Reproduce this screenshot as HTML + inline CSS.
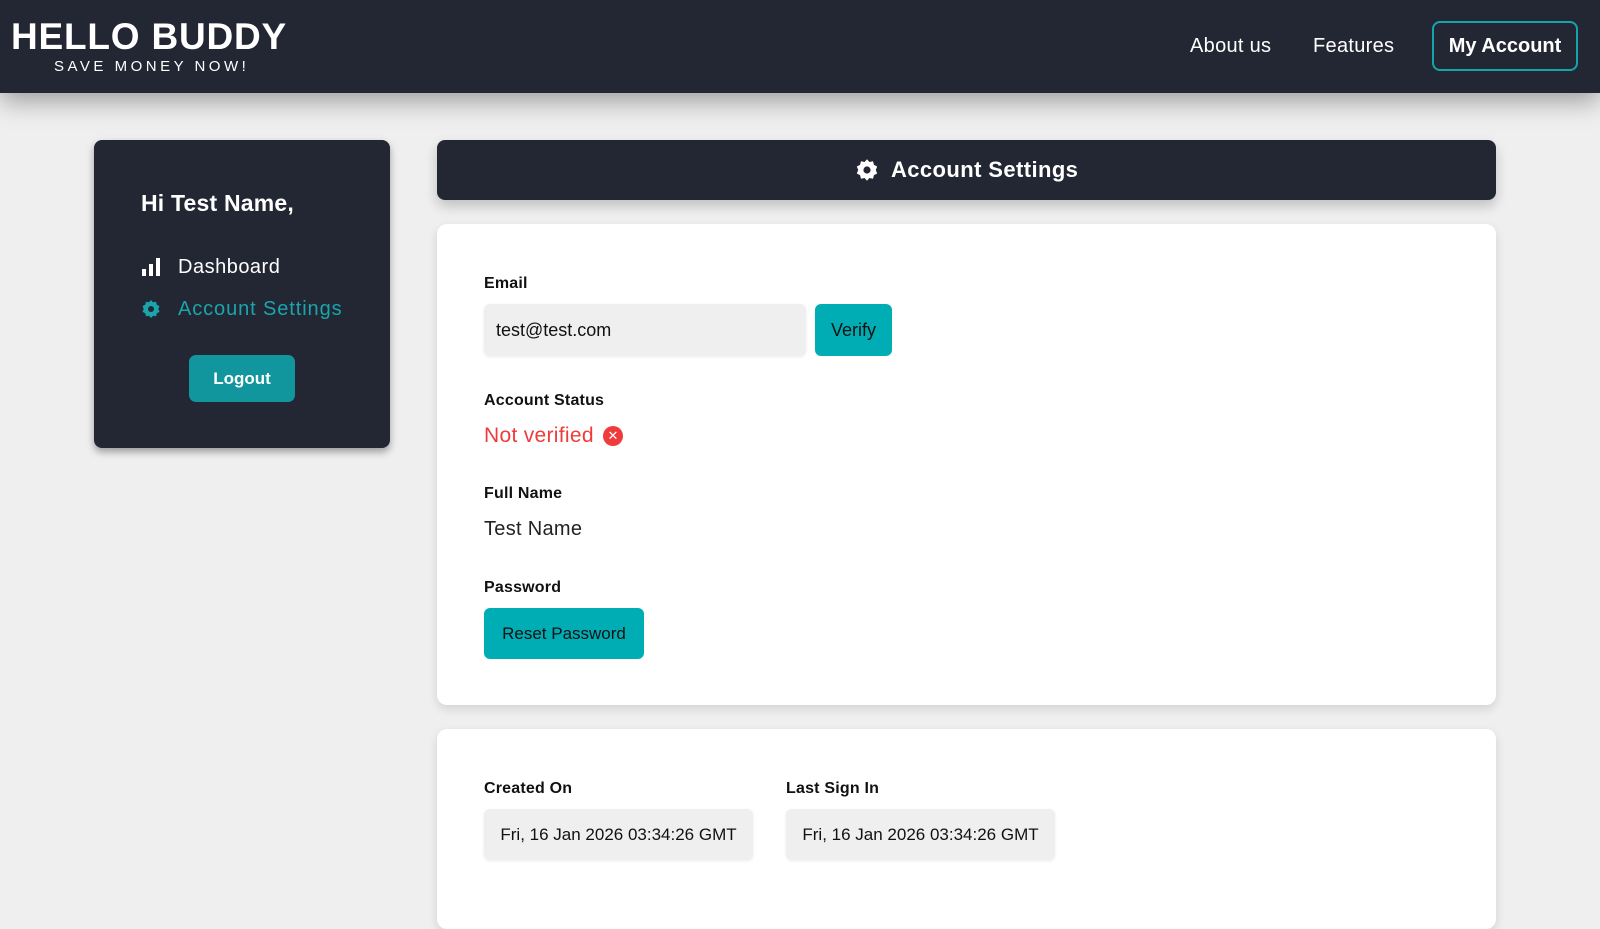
<!DOCTYPE html>
<html><head><meta charset="utf-8"><style>
*{box-sizing:border-box;margin:0;padding:0}
body{width:1600px;height:899px;overflow:hidden;background:#efefef;font-family:"Liberation Sans",sans-serif;color:#111;position:relative}
.hdr{position:absolute;left:0;top:0;width:1600px;height:93px;background:#232733;box-shadow:0 8px 24px rgba(0,0,0,.35);z-index:2}
.logo{position:absolute;left:11px;top:16px;color:#fff;font-weight:bold;font-size:37px;letter-spacing:0.8px;line-height:42px}
.tag{position:absolute;left:54px;top:58px;color:#fff;font-size:15px;letter-spacing:3.5px}
.nav{position:absolute;top:35px;color:#fff;font-size:20px;letter-spacing:0.3px}
.acct{position:absolute;left:1432px;top:21px;width:146px;height:50px;border:2px solid #14a5ab;border-radius:8px;color:#fff;font-weight:bold;font-size:20px;text-align:center;line-height:46px}
.side{position:absolute;left:94px;top:140px;width:296px;height:308px;background:#232733;border-radius:8px;box-shadow:0 4px 8px rgba(0,0,0,.35)}
.abs{position:absolute}
.tbar{position:absolute;left:437px;top:140px;width:1059px;height:60px;background:#232733;border-radius:8px;box-shadow:0 6px 12px rgba(0,0,0,.2);color:#fff;font-weight:bold;font-size:22px;letter-spacing:0.4px}
.card{position:absolute;left:437px;width:1059px;background:#fff;border-radius:10px;box-shadow:0 4px 10px rgba(0,0,0,.12)}
.lbl{position:absolute;font-weight:bold;font-size:16px;letter-spacing:0.2px}
.box{position:absolute;background:#efefef;border-radius:6px;font-size:18px;box-shadow:0 1px 3px rgba(0,0,0,.08)}
.btn{position:absolute;background:#00adb5;border-radius:6px;font-size:18px;color:#111;text-align:center}
</style></head><body>
<div class="hdr">
<div class="logo">HELLO BUDDY</div>
<div class="tag">SAVE MONEY NOW!</div>
<div class="nav" style="left:1190px">About us</div>
<div class="nav" style="left:1313px">Features</div>
<div class="acct">My Account</div>
</div>
<div class="side">
<div class="abs" style="left:47px;top:50px;color:#fff;font-weight:bold;font-size:23px;letter-spacing:0.2px">Hi Test Name,</div>
<svg class="abs" style="left:47px;top:117px" width="20" height="20" viewBox="0 0 20 20"><rect x="1" y="12" width="4" height="7" fill="#fff"/><rect x="8" y="7" width="4" height="12" fill="#fff"/><rect x="15" y="1" width="4" height="18" fill="#fff"/></svg>
<div class="abs" style="left:84px;top:116px;color:#fff;font-size:20px;letter-spacing:0.5px">Dashboard</div>
<svg class="abs" style="left:47px;top:159px" width="20" height="20" viewBox="0 0 20 20"><path d="M10 1l2 2.3 3-.6.8 3 2.7 1.4-1.2 2.9 1.2 2.9-2.7 1.4-.8 3-3-.6L10 19l-2-2.3-3 .6-.8-3-2.7-1.4L2.7 10 1.5 7.1 4.2 5.7l.8-3 3 .6z" fill="#1aa5ac"/><circle cx="10" cy="10" r="3" fill="#232733"/></svg>
<div class="abs" style="left:84px;top:158px;color:#1aa5ac;font-size:20px;letter-spacing:0.9px">Account Settings</div>
<div class="abs" style="left:95px;top:215px;width:106px;height:47px;background:#12969d;border-radius:7px;color:#fff;font-size:17px;text-align:center;line-height:47px;font-weight:bold">Logout</div>
</div>
<div class="tbar">
<svg class="abs" style="left:418px;top:18px" width="24" height="24" viewBox="0 0 20 20"><path d="M10 1l2 2.3 3-.6.8 3 2.7 1.4-1.2 2.9 1.2 2.9-2.7 1.4-.8 3-3-.6L10 19l-2-2.3-3 .6-.8-3-2.7-1.4L2.7 10 1.5 7.1 4.2 5.7l.8-3 3 .6z" fill="#fff"/><circle cx="10" cy="10" r="3" fill="#232733"/></svg>
<div class="abs" style="left:454px;top:17px">Account Settings</div>
</div>
<div class="card" style="top:224px;height:481px">
<div class="lbl" style="left:47px;top:51px">Email</div>
<div class="box" style="left:47px;top:80px;width:322px;height:52px;line-height:52px;padding-left:12px">test@test.com</div>
<div class="btn" style="left:378px;top:80px;width:77px;height:52px;line-height:52px">Verify</div>
<div class="lbl" style="left:47px;top:168px">Account Status</div>
<div class="abs" style="left:47px;top:200px;color:#ef3b3b;font-size:21px;letter-spacing:0.3px">Not verified</div>
<div class="abs" style="left:166px;top:202px;width:20px;height:20px;border-radius:50%;background:#ef3b3b;color:#fff;font-size:13px;text-align:center;line-height:20px">✕</div>
<div class="lbl" style="left:47px;top:261px">Full Name</div>
<div class="abs" style="left:47px;top:294px;font-size:20px;color:#222;letter-spacing:0.3px">Test Name</div>
<div class="lbl" style="left:47px;top:355px">Password</div>
<div class="btn" style="left:47px;top:384px;width:160px;height:51px;line-height:51px;font-size:17px">Reset Password</div>
</div>
<div class="card" style="top:729px;height:200px">
<div class="lbl" style="left:47px;top:51px">Created On</div>
<div class="box" style="left:47px;top:80px;width:269px;height:51px;line-height:51px;text-align:center;font-size:17px">Fri, 16 Jan 2026 03:34:26 GMT</div>
<div class="lbl" style="left:349px;top:51px">Last Sign In</div>
<div class="box" style="left:349px;top:80px;width:269px;height:51px;line-height:51px;text-align:center;font-size:17px">Fri, 16 Jan 2026 03:34:26 GMT</div>
</div>
</body></html>
